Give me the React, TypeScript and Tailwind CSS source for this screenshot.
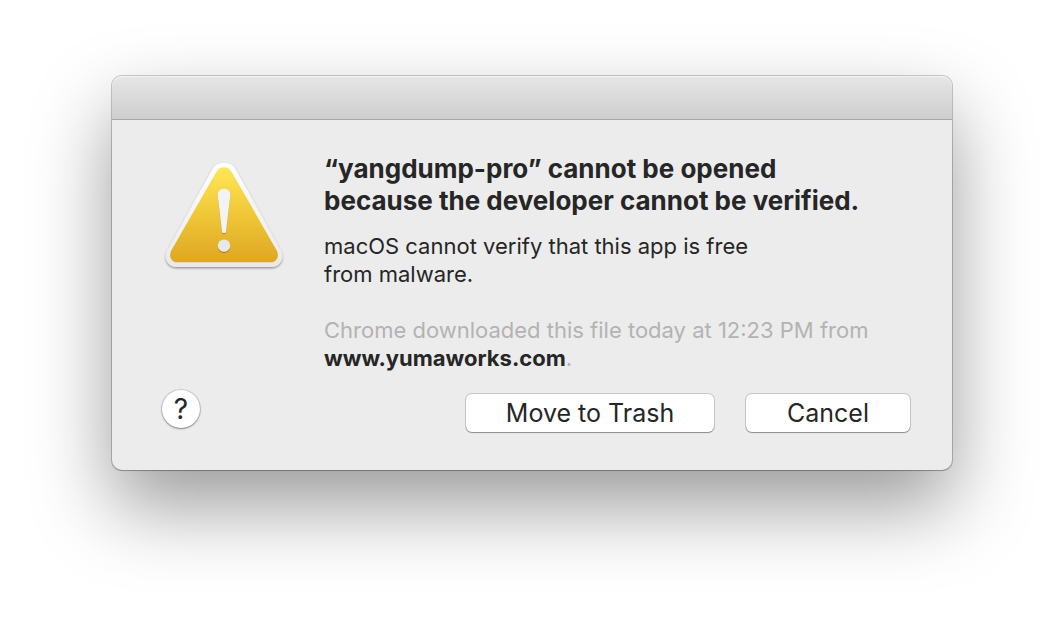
function WarningIcon() {
  return (
    <svg viewBox="0 0 120 112" className="h-28 w-30 shrink-0" role="img" aria-label="Warning">
      <defs>
        <linearGradient id="fill" x1="0" y1="0" x2="0" y2="1">
          <stop offset="0" stopColor="#ffe757" />
          <stop offset="0.5" stopColor="#efc737" />
          <stop offset="1" stopColor="#dfa622" />
        </linearGradient>
        <linearGradient id="rim" x1="0" y1="0" x2="0" y2="1">
          <stop offset="0" stopColor="#ffffff" />
          <stop offset="1" stopColor="#e9e9e9" />
        </linearGradient>
        <filter id="rimShadow" x="-10%" y="-10%" width="120%" height="120%">
          <feDropShadow dx="0" dy="1.2" stdDeviation="0.9" floodColor="#000" floodOpacity="0.42" />
        </filter>
        <filter id="markShadow" x="-30%" y="-30%" width="160%" height="160%">
          <feDropShadow dx="0" dy="0.9" stdDeviation="0.6" floodColor="#6b4a00" floodOpacity="0.65" />
        </filter>
      </defs>
      <path
        d="M48.5 9C53.5 .6 66.5 .6 71.5 9L117 90.5C121 98 116 107 107.5 107H12.5C4 107-1 98 3 90.5Z"
        fill="url(#rim)"
        filter="url(#rimShadow)"
      />
      <path
        d="M52 12.5C55.5 5.6 64.5 5.6 68 12.5L113 91C115.5 96.5 112.5 102.3 107 102.3H13C7.5 102.3 4.5 96.5 7 91Z"
        fill="url(#fill)"
      />
      <g fill="#f3f3f3" filter="url(#markShadow)">
        <path d="M60 28.7C56.2 28.7 53.4 31.2 53.7 35.5L58 71.5C58.2 73.8 61.8 73.8 62 71.5L66.3 35.5C66.6 31.2 63.8 28.7 60 28.7Z" />
        <circle cx="60" cy="85.7" r="6.2" fill="#e8e8e8" />
      </g>
    </svg>
  );
}

const pushButton =
  "mt-1 h-[38px] rounded-md bg-white text-[25px] leading-[38px] text-[#262626] shadow-[0_0_0_1px_rgba(0,0,0,0.15),0_1px_1px_rgba(0,0,0,0.3)]";

export default function App() {
  return (
    <main className="min-h-screen bg-white px-6 pt-19 pb-36 font-['Inter',sans-serif] text-[#262626]">
      <section
        role="alertdialog"
        aria-labelledby="title"
        aria-describedby="message"
        className="mx-auto max-w-[840px] rounded-[10px] bg-[#ececec] shadow-[0_0_0_1px_rgba(0,0,0,0.2),0_1px_1px_rgba(0,0,0,0.15),0_36px_80px_rgba(0,0,0,0.4)]"
      >
        <header className="h-11 rounded-t-[10px] border-b border-[#a6a6a6] bg-linear-to-b from-[#e6e6e6] to-[#cecece] shadow-[inset_0_1px_0_#f4f4f4]" />
        <div className="flex gap-10 pt-8 pr-10 pl-13">
          <div className="pt-2">
            <WarningIcon />
          </div>
          <div className="min-w-0 pt-px">
            <h1 id="title" className="text-[26px] leading-8 font-bold">
              “yangdump-pro” cannot be opened
              <br />
              because the developer cannot be verified.
            </h1>
            <p id="message" className="mt-[15px] text-[22px] leading-7">
              macOS cannot verify that this app is free
              <br />
              from malware.
            </p>
            <p className="mt-7 text-[22px] leading-7 text-[#b3b3b3]">
              Chrome downloaded this file today at 12:23 PM from
              <br />
              <strong className="font-bold text-[#262626]">www.yumaworks.com</strong>.
            </p>
          </div>
        </div>
        <footer className="flex items-start pt-[18px] pr-[42px] pb-[38px] pl-[50px]">
          <button
            type="button"
            aria-label="Help"
            className="mr-auto size-[38px] rounded-full bg-white text-[28px] leading-[38px] shadow-[0_0_0_1px_rgba(0,0,0,0.12),0_1px_2px_rgba(0,0,0,0.35)]"
          >
            ?
          </button>
          <button type="button" className={`${pushButton} mr-8 w-[248px]`}>
            Move to Trash
          </button>
          <button type="button" className={`${pushButton} w-[164px]`}>
            Cancel
          </button>
        </footer>
      </section>
    </main>
  );
}
